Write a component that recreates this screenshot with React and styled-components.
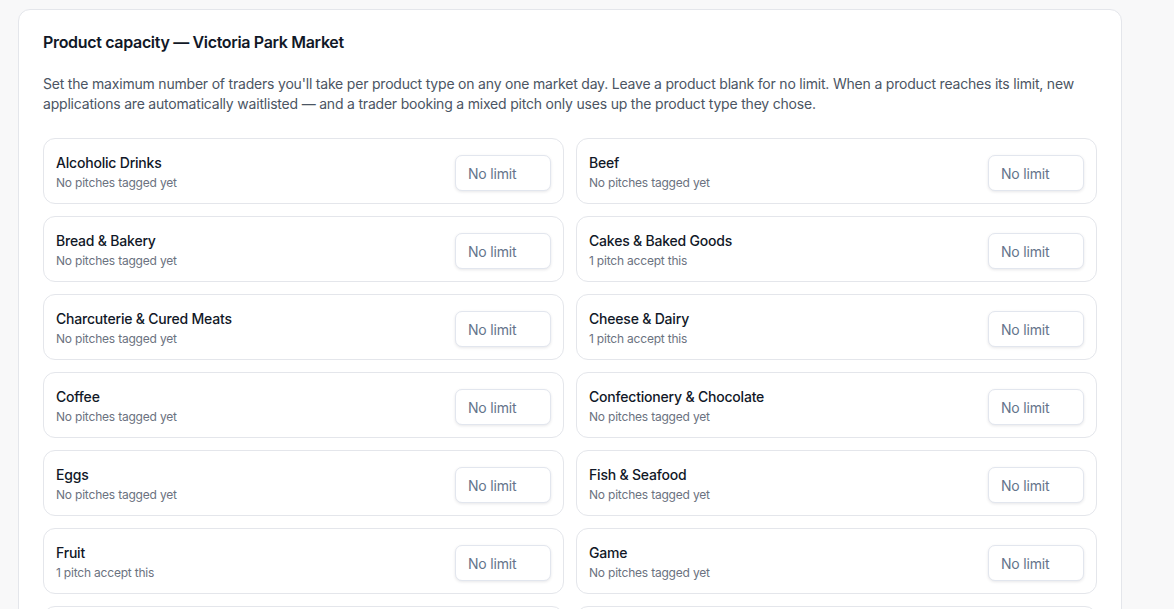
import styled, { createGlobalStyle } from "styled-components";

const GlobalStyle = createGlobalStyle`
    * { box-sizing: border-box; }
    body {
        margin: 0;
        background: #f8f8f9;
        font-family: Inter, "Noto Sans", sans-serif;
        color: #111827;
        letter-spacing: -0.2px;
    }
`;

const Page = styled.div`
    padding: 9px 52px 40px 18px;
`;
const Panel = styled.section`
    background: #fff;
    border: 1px solid #e4e6eb;
    border-radius: 12px;
    padding: 20px 24px 24px;
`;
const Title = styled.h2`
    margin: 0;
    font-size: 16px;
    line-height: 24px;
    font-weight: 600;
    letter-spacing: -0.33px;
    color: #111827;
`;
const Desc = styled.p`
    margin: 20px 0 24px;
    font-size: 14px;
    line-height: 20px;
    color: #4b5563;
`;
const Grid = styled.div`
    display: grid;
    grid-template-columns: 1fr 1fr;
    gap: 12px;
`;
const Item = styled.div`
    display: flex;
    align-items: center;
    justify-content: space-between;
    gap: 12px;
    padding: 12px;
    border: 1px solid #e4e6eb;
    border-radius: 12px;
    background: #fff;
`;
const Info = styled.div`
    padding-top: 2px;
`;
const Name = styled.div`
    font-size: 14px;
    line-height: 20px;
    font-weight: 500;
    color: #111827;
`;
const Sub = styled.div`
    margin-top: 2px;
    font-size: 12px;
    line-height: 16px;
    color: #6b7280;
`;
const LimitInput = styled.input`
    align-self: flex-end;
    width: 96px;
    height: 36px;
    padding: 0 12px;
    border: 1px solid #e2e6ee;
    border-radius: 7px;
    box-shadow: 0 1px 3px rgba(15, 23, 42, 0.1);
    font-family: inherit;
    font-size: 14px;
    letter-spacing: -0.2px;
    color: #111827;
    outline: none;
    &::placeholder {
        color: #64748b;
    }
`;

const products = [
    ["Alcoholic Drinks", 0],
    ["Beef", 0],
    ["Bread & Bakery", 0],
    ["Cakes & Baked Goods", 1],
    ["Charcuterie & Cured Meats", 0],
    ["Cheese & Dairy", 1],
    ["Coffee", 0],
    ["Confectionery & Chocolate", 0],
    ["Eggs", 0],
    ["Fish & Seafood", 0],
    ["Fruit", 1],
    ["Game", 0],
    ["Hot Food", 0],
    ["Juices & Smoothies", 0],
];

export default function App() {
    return (
        <>
            <GlobalStyle />
            <Page>
                <Panel>
                    <Title>Product capacity — Victoria Park Market</Title>
                    <Desc>
                        Set the maximum number of traders you'll take per product type on any one market day. Leave a
                        product blank for no limit. When a product reaches its limit, new applications are automatically
                        waitlisted — and a trader booking a mixed pitch only uses up the product type they chose.
                    </Desc>
                    <Grid>
                        {products.map(([name, count]) => (
                            <Item key={name}>
                                <Info>
                                    <Name>{name}</Name>
                                    <Sub>{count ? `${count} pitch accept this` : "No pitches tagged yet"}</Sub>
                                </Info>
                                <LimitInput type="number" placeholder="No limit" />
                            </Item>
                        ))}
                    </Grid>
                </Panel>
            </Page>
        </>
    );
}
